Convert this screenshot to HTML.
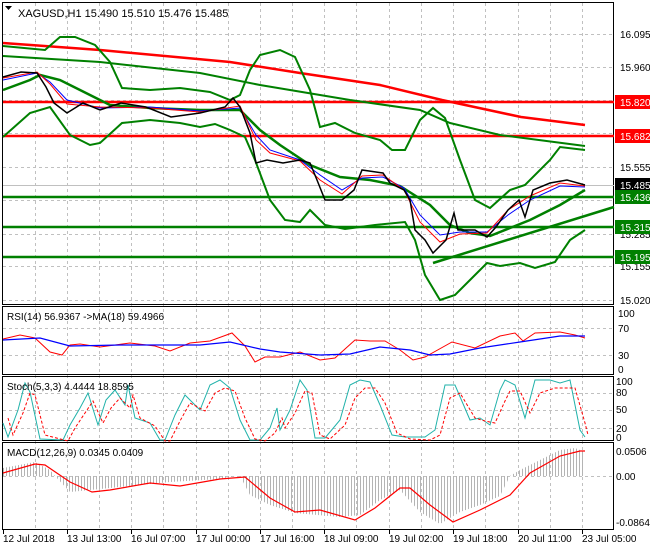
<!DOCTYPE html>
<html><head><meta charset="utf-8"><style>
html,body{margin:0;padding:0;background:#fff;}
svg{display:block;font-family:"Liberation Sans",sans-serif;}
</style></head><body>
<svg width="650" height="550" viewBox="0 0 650 550" xmlns="http://www.w3.org/2000/svg">
<defs>
<pattern id="hb" width="3" height="10" patternUnits="userSpaceOnUse"><rect x="0" y="0" width="1" height="10" fill="#b4b4b4"/></pattern>
</defs>
<rect width="650" height="550" fill="#fff"/>
<!-- grid -->
<g stroke="#c0c0c0" stroke-dasharray="3,3" stroke-width="1">
<path d="M35.5 3V528M67.5 3V528M99.5 3V528M131.5 3V528M163.5 3V528M196.5 3V528M228.5 3V528M260.5 3V528M292.5 3V528M324.5 3V528M356.5 3V528M389.5 3V528M421.5 3V528M453.5 3V528M485.5 3V528M518.5 3V528M550.5 3V528M582.5 3V528"/>
<path d="M3 34.5H614M3 67.5H614M3 100.5H614M3 133.5H614M3 167.5H614M3 200.5H614M3 234.5H614M3 266.5H614M3 300.5H614"/>
<path d="M3 328.5H614M3 355.5H614M3 393.5H614M3 410.5H614M3 428.5H614M3 476.5H614"/>
</g>
<!-- panel borders -->
<g fill="none" stroke="#000" stroke-width="1">
<rect x="2.5" y="2.5" width="611" height="302"/>
<rect x="2.5" y="306.5" width="611" height="68"/>
<rect x="2.5" y="376.5" width="611" height="64"/>
<rect x="2.5" y="442.5" width="611" height="87"/>
</g>
<line x1="3" y1="185.5" x2="614" y2="185.5" stroke="#c0c0c0"/>
<!-- horizontal levels -->
<g stroke-width="2.5">
<line x1="3" y1="102" x2="614" y2="102" stroke="#f00"/>
<line x1="3" y1="136" x2="614" y2="136" stroke="#f00"/>
<line x1="3" y1="197" x2="614" y2="197" stroke="#008000"/>
<line x1="3" y1="227" x2="614" y2="227" stroke="#008000"/>
<line x1="3" y1="257" x2="614" y2="257" stroke="#008000"/>
<line x1="433" y1="263" x2="614" y2="207" stroke="#008000"/>
</g>
<!-- MA200 -->
<polyline fill="none" stroke="#f00" stroke-width="2.5" points="3,43 100,50 230,62 300,73 380,85 442,100 521,117 585,125"/>
<polyline fill="none" stroke="#008000" stroke-width="2" points="3,56 100,62 200,73 260,85 350,100 420,110 450,123 500,135 585,146"/>
<!-- bollinger -->
<g fill="none" stroke="#008000" stroke-width="2">
<polyline points="3,46 45,50 60,37 75,37 95,45 110,62 122,88 150,90 180,88 210,92 230,100 240,95 250,70 260,55 280,50 295,57 310,90 320,127 335,123 355,133 380,140 392,150 405,150 420,120 433,108 445,118 460,160 475,200 490,208 510,190 525,185 550,160 560,147 585,150"/>
<polyline points="3,137 30,113 50,107 70,135 90,145 100,143 122,123 150,120 180,123 200,127 215,124 230,130 245,137 255,160 270,200 285,220 300,222 310,210 325,225 345,229 375,225 405,222 415,240 425,275 440,300 455,295 470,280 487,263 500,266 520,263 535,268 555,262 570,240 585,230"/>
<polyline stroke-width="2.5" points="3,90 30,80 40,75 60,80 80,90 110,105 150,108 200,110 240,110 260,130 280,145 310,165 340,177 370,180 400,186 430,205 450,225 470,233 490,236 510,228 530,220 560,205 585,190"/>
</g>
<!-- small MAs -->
<polyline fill="none" stroke="#00f" stroke-width="1" points="3,80 37,73 50,82 67,100 100,108 150,107 200,111 240,108 256,135 270,150 300,160 320,175 342,190 362,178 383,177 404,188 420,215 440,235 460,232 487,232 508,215 530,200 560,186 585,187"/>
<polyline fill="none" stroke="#f00" stroke-width="1" points="3,78 37,72 50,84 67,104 100,107 150,108 200,112 240,106 256,140 270,153 300,161 320,180 342,194 362,176 383,175 404,190 420,222 440,242 460,234 487,233 508,210 530,196 560,183 585,186"/>
<!-- price -->
<polyline fill="none" stroke="#000" stroke-width="1.5" points="3,77 21,72 37,73 46,87 54,103 67,113 83,103 100,110 121,103 146,107 171,117 200,113 225,107 233,98 240,107 250,133 256,163 267,160 283,163 300,160 310,163 317,180 325,200 342,200 354,190 362,170 383,173 390,183 404,190 410,200 415,230 425,240 433,253 446,240 454,213 458,230 475,230 487,237 496,227 508,210 519,200 525,217 533,190 550,183 567,180 585,185"/>
<!-- RSI -->
<polyline fill="none" stroke="#f00" stroke-width="1" points="3,339 20,335 35,338 50,352 62,355 70,345 80,344 100,347 130,343 155,346 170,351 190,343 210,341 232,333 245,346 255,362 265,357 280,357 300,352 320,360 335,358 355,340 370,341 385,341 400,350 413,360 425,357 452,342 475,348 500,336 515,333 523,341 535,333 560,332 575,335 585,338"/>
<polyline fill="none" stroke="#00f" stroke-width="1.2" points="3,340 40,338 70,346 120,345 200,345 230,342 260,349 280,352 320,355 350,354 380,347 410,350 430,355 450,354 480,348 520,342 560,336 585,336"/>
<!-- Stoch -->
<polyline id="st" fill="none" stroke="#20b2aa" stroke-width="1" points="3,423 8,437 18,410 25,383 30,392 40,439 63,440 70,425 80,408 88,393 98,425 106,400 115,390 125,405 128,385 135,418 150,423 160,440 165,440 175,415 185,395 200,410 210,385 220,380 230,388 240,420 250,440 260,440 270,428 277,408 280,430 290,410 300,380 307,390 315,438 325,438 340,420 350,385 360,380 370,382 380,405 392,435 405,437 425,437 435,430 445,385 455,385 470,420 480,418 490,425 500,390 505,380 515,385 525,418 535,380 550,380 560,383 570,380 580,430 585,437"/>
<polyline fill="none" stroke="#f00" stroke-width="1" stroke-dasharray="3,2" transform="translate(5,3)" points="3,415 8,432 18,410 25,390 30,392 40,432 63,438 70,425 80,410 88,398 98,420 106,405 115,395 125,405 128,392 135,415 150,423 160,438 165,438 175,418 185,400 200,408 210,390 220,385 230,388 240,415 250,436 260,438 270,430 277,415 280,425 290,410 300,388 307,390 315,432 325,436 340,422 350,395 360,385 370,385 380,400 392,430 405,436 425,437 435,432 445,395 455,390 470,415 480,418 490,420 500,398 505,388 515,388 525,410 535,390 550,385 560,385 570,385 580,420 583,432"/>
<!-- MACD -->
<polygon fill="url(#hb)" points="3,476 3,468 35,462 50,470 55,476 70,492 90,490 130,486 170,482 220,479 235,476 240,476 250,495 270,505 295,513 340,517 360,515 380,500 400,490 420,512 440,524 460,512 480,505 500,496 510,476 520,470 540,460 560,450 575,448 585,452 585,476"/>
<polyline fill="none" stroke="#f00" stroke-width="1.2" points="3,473 35,464 45,465 70,482 92,492 110,490 150,483 180,486 220,479 245,477 270,498 295,512 320,510 355,520 375,508 400,488 410,488 430,505 453,522 480,510 510,495 530,473 560,456 580,451 585,451"/>
<!-- texts -->
<g font-size="11" fill="#000">
<path d="M5 6H12L8.5 10Z" fill="#000"/>
<text x="18" y="17">XAGUSD,H1  15.490 15.510 15.476 15.485</text>
<text x="7" y="320" font-size="10">RSI(14) 56.9367  -&gt;MA(18) 59.4966</text>
<text x="7" y="390" font-size="10">Stoch(5,3,3) 4.4444 18.8595</text>
<text x="7" y="456" font-size="10">MACD(12,26,9) 0.0345 0.0409</text>
</g>
<g font-size="10" fill="#000">
<text x="620" y="38">16.095</text>
<text x="620" y="71">15.960</text>
<text x="620" y="171">15.555</text>
<text x="620" y="204">15.420</text>
<text x="620" y="238">15.285</text>
<text x="620" y="270">15.155</text>
<text x="620" y="304">15.020</text>
<text x="618" y="317">100</text>
<text x="618" y="332">70</text>
<text x="618" y="359">30</text>
<text x="618" y="373">0</text>
<text x="616" y="385">100</text>
<text x="616" y="396">80</text>
<text x="616" y="413">50</text>
<text x="616" y="432">20</text>
<text x="616" y="441">0</text>
<text x="616" y="455">0.0506</text>
<text x="616" y="480">0.00</text>
<text x="616" y="526">-0.0864</text>
</g>
<g font-size="10" fill="#fff">
<rect x="615" y="95" width="35" height="14" fill="#f00"/><text x="620" y="106">15.820</text>
<rect x="615" y="129" width="35" height="14" fill="#f00"/><text x="620" y="140">15.682</text>
<rect x="615" y="178" width="35" height="14" fill="#000"/><text x="620" y="189">15.485</text>
<rect x="615" y="190" width="35" height="14" fill="#008000"/><text x="620" y="201">15.436</text>
<rect x="615" y="220" width="35" height="14" fill="#008000"/><text x="620" y="231">15.315</text>
<rect x="615" y="250" width="35" height="14" fill="#008000"/><text x="620" y="261">15.195</text>
</g>
<g font-size="10" fill="#000">
<text x="3" y="542">12 Jul 2018</text>
<text x="67" y="542">13 Jul 13:00</text>
<text x="131" y="542">16 Jul 07:00</text>
<text x="196" y="542">17 Jul 00:00</text>
<text x="260" y="542">17 Jul 16:00</text>
<text x="324" y="542">18 Jul 09:00</text>
<text x="389" y="542">19 Jul 02:00</text>
<text x="453" y="542">19 Jul 18:00</text>
<text x="518" y="542">20 Jul 11:00</text>
<text x="582" y="542">23 Jul 05:00</text>
</g>
<g stroke="#000"><path d="M3.5 530V534M67.5 530V534M131.5 530V534M196.5 530V534M260.5 530V534M324.5 530V534M389.5 530V534M453.5 530V534M518.5 530V534M582.5 530V534"/></g>
</svg>
</body></html>
